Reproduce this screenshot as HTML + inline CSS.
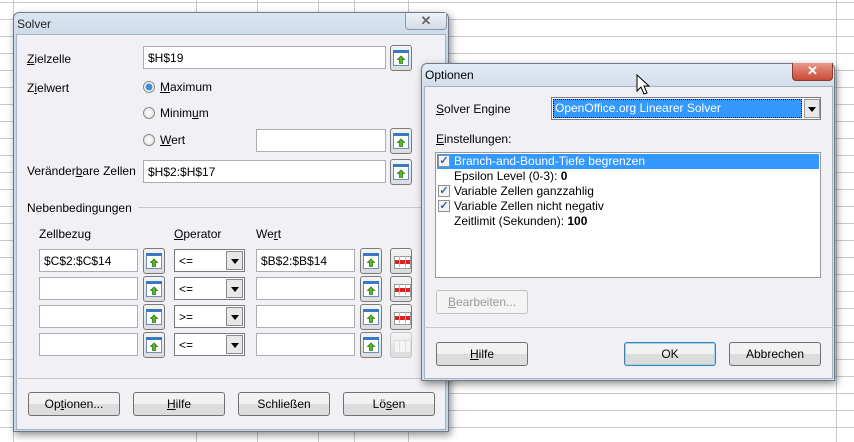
<!DOCTYPE html>
<html><head><meta charset="utf-8"><style>
*{box-sizing:border-box;margin:0;padding:0}
body{width:854px;height:442px;overflow:hidden;position:relative;font-family:"Liberation Sans",sans-serif;font-size:12px;color:#000;
background-color:#fff;
background-image:linear-gradient(#c8c8c8 1px,transparent 1px);
background-size:100% 17px;background-position:0 2px;}
.v{position:absolute;top:0;width:1px;height:442px;background:#c8c8c8}
.a{position:absolute;white-space:nowrap}
.win{position:absolute;border:1px solid #6f7a86;border-radius:6px 6px 0 0;background:linear-gradient(#dbe6f2,#c9d6e4 30px);box-shadow:2px 3px 8px rgba(0,0,0,.45)}
.client{position:absolute;background:#f1f0f4;border:1px solid #a6b2c0}
.inp{position:absolute;background:#fff;border:1px solid #abadb3;height:23px;padding:4px 0 0 4px}
.rb{position:absolute;width:22px;height:26px;border:1px solid #7a7a7a;border-radius:3px;background:linear-gradient(#f4f4f4,#dcdcdc)}
.rb svg{position:absolute;left:2px;top:4px}
.del{position:absolute;width:22px;height:26px;border:1px solid #7a7a7a;border-radius:3px;background:linear-gradient(#f4f4f4,#dcdcdc)}
.del:before{content:"";position:absolute;left:3px;top:7px;width:15px;height:11px;background:linear-gradient(#fff 0 3px,#d22 3px 7px,#fff 7px);border:1px solid #999}
.del:after{content:"";position:absolute;left:8px;top:7px;width:5px;height:11px;border-left:1px solid #bbb;border-right:1px solid #bbb}
.del.dis{border-color:#c8c8c8}.del.dis:before{background:#f4f4f4;border-color:#ddd}.del.dis:after{border-color:#ddd}
.sel{position:absolute;background:#fff;border:1px solid #7a7a7a;height:23px;padding:4px 0 0 4px;width:71px}
.sel i{position:absolute;right:1px;top:1px;width:17px;height:19px;border:1px solid #888;background:#e8e8e8}
.sel i:after{content:"";position:absolute;left:4px;top:7px;border:4px solid transparent;border-top:5px solid #000}
.btn{position:absolute;height:24px;border:1px solid #707070;border-radius:3px;background:linear-gradient(#f2f2f2 50%,#dcdcdc 50%);text-align:center;line-height:22px}
.radio{position:absolute;width:12px;height:12px;border-radius:50%;border:1px solid #8a8a8a;background:radial-gradient(#fff,#ddd)}
.chk{position:absolute;width:12px;height:12px;border:1px solid #8f8f8f;background:#f4f4f4;color:#3a5fa8;font-size:11px;line-height:10px;text-align:center;font-weight:bold}
u{text-decoration:underline}
</style></head><body>
<svg width="0" height="0" style="position:absolute"><defs><g id="ic"><rect x="0.5" y="0.5" width="15" height="15" fill="#fff" stroke="#6a8fbf"/><rect x="0" y="0" width="16" height="3" fill="#3b78c4"/><path d="M8 6 L4.5 9.5 H6.5 V13.5 H9.5 V9.5 H11.5 Z" fill="#5cb82a" stroke="#2e7a10" stroke-width="0.8"/></g></defs></svg>
<div class="v" style="left:196px"></div><div class="v" style="left:257px"></div><div class="v" style="left:318px"></div><div class="v" style="left:354px"></div><div class="v" style="left:408px"></div><div class="v" style="left:836px"></div><div class="v" style="left:13px"></div>

<!-- Solver -->
<div class="win" style="left:13px;top:12px;width:436px;height:420px"></div>
<div class="a" style="left:17px;top:17px;font-size:12px;color:#222">Solver</div>
<div class="a" style="left:405px;top:13px;width:42px;height:17px;border:1px solid #8c97a5;border-top:0;border-radius:0 0 4px 4px;background:linear-gradient(#eef2f7,#d4dce6);text-align:center;color:#666;font-weight:bold;font-size:13px;line-height:15px">✕</div>
<div class="client" style="left:16px;top:34px;width:430px;height:396px"></div>

<div class="a" style="left:27px;top:52px"><u>Z</u>ielzelle</div>
<div class="inp" style="left:143px;top:46px;width:243px">$H$19</div>
<div class="rb" style="left:390px;top:45px"><svg width="16" height="16"><use href="#ic"/></svg></div>
<div class="a" style="left:27px;top:81px">Z<u>i</u>elwert</div>
<div class="radio" style="left:143px;top:81px;background:radial-gradient(#3a8fd8 0 3px,#fff 4px,#ddd)"></div>
<div class="a" style="left:160px;top:80px"><u>M</u>aximum</div>
<div class="radio" style="left:143px;top:107px"></div>
<div class="a" style="left:160px;top:106px">Minim<u>u</u>m</div>
<div class="radio" style="left:143px;top:134px"></div>
<div class="a" style="left:160px;top:133px"><u>W</u>ert</div>
<div class="inp" style="left:256px;top:129px;width:130px"></div>
<div class="rb" style="left:390px;top:128px"><svg width="16" height="16"><use href="#ic"/></svg></div>
<div class="a" style="left:27px;top:164px">Veränder<u>b</u>are Zellen</div>
<div class="inp" style="left:143px;top:160px;width:243px">$H$2:$H$17</div>
<div class="rb" style="left:390px;top:159px"><svg width="16" height="16"><use href="#ic"/></svg></div>

<div class="a" style="left:27px;top:201px">Nebenbedingungen</div>
<div class="a" style="left:138px;top:207px;width:307px;height:1px;background:#c8c8cc"></div>
<div class="a" style="left:39px;top:227px">Zellbezu<u>g</u></div>
<div class="a" style="left:174px;top:227px"><u>O</u>perator</div>
<div class="a" style="left:256px;top:227px">We<u>r</u>t</div>

<div class="inp" style="left:39px;top:249px;width:99px">$C$2:$C$14</div><div class="rb" style="left:143px;top:248px"><svg width="16" height="16"><use href="#ic"/></svg></div><div class="sel" style="left:174px;top:249px">&lt;=<i></i></div><div class="inp" style="left:256px;top:249px;width:99px">$B$2:$B$14</div><div class="rb" style="left:360px;top:248px"><svg width="16" height="16"><use href="#ic"/></svg></div><div class="del" style="left:390px;top:248px"></div>
<div class="inp" style="left:39px;top:277px;width:99px"></div><div class="rb" style="left:143px;top:276px"><svg width="16" height="16"><use href="#ic"/></svg></div><div class="sel" style="left:174px;top:277px">&lt;=<i></i></div><div class="inp" style="left:256px;top:277px;width:99px"></div><div class="rb" style="left:360px;top:276px"><svg width="16" height="16"><use href="#ic"/></svg></div><div class="del" style="left:390px;top:276px"></div>
<div class="inp" style="left:39px;top:305px;width:99px"></div><div class="rb" style="left:143px;top:304px"><svg width="16" height="16"><use href="#ic"/></svg></div><div class="sel" style="left:174px;top:305px">&gt;=<i></i></div><div class="inp" style="left:256px;top:305px;width:99px"></div><div class="rb" style="left:360px;top:304px"><svg width="16" height="16"><use href="#ic"/></svg></div><div class="del" style="left:390px;top:304px"></div>
<div class="inp" style="left:39px;top:333px;width:99px"></div><div class="rb" style="left:143px;top:332px"><svg width="16" height="16"><use href="#ic"/></svg></div><div class="sel" style="left:174px;top:333px">&lt;=<i></i></div><div class="inp" style="left:256px;top:333px;width:99px"></div><div class="rb" style="left:360px;top:332px"><svg width="16" height="16"><use href="#ic"/></svg></div><div class="del dis" style="left:390px;top:332px"></div>

<div class="a" style="left:16px;top:378px;width:430px;height:1px;background:#c8c8cc"></div>
<div class="btn" style="left:28px;top:392px;width:92px">Op<u>t</u>ionen...</div>
<div class="btn" style="left:133px;top:392px;width:92px"><u>H</u>ilfe</div>
<div class="btn" style="left:238px;top:392px;width:92px">Schließen</div>
<div class="btn" style="left:343px;top:392px;width:92px">Lö<u>s</u>en</div>

<!-- Optionen -->
<div class="win" style="left:421px;top:63px;width:414px;height:318px;background:linear-gradient(#e3ecf6,#d2ddea 24px)"></div>
<div class="a" style="left:425px;top:68px;color:#000">Optionen</div>
<div class="a" style="left:792px;top:63px;width:41px;height:18px;border:1px solid #8a3a30;border-top:0;border-radius:0 0 4px 4px;background:linear-gradient(#e89a8a,#c84a36);text-align:center;color:#fff;font-weight:bold;font-size:13px;line-height:16px">✕</div>
<div class="client" style="left:424px;top:86px;width:409px;height:293px"></div>
<div class="a" style="left:436px;top:102px"><u>S</u>olver Engine</div>
<div class="a" style="left:551px;top:97px;width:270px;height:23px;border:1px solid #7a7a7a;background:#fff"></div>
<div class="a" style="left:553px;top:99px;width:249px;height:19px;background:#3399ff;outline:1px dotted #000;outline-offset:-1px;color:#fff;padding:2px 0 0 2px">OpenOffice.org Linearer Solver</div>
<div class="a" style="left:804px;top:99px;width:16px;height:19px;border:1px solid #999;background:#e8e8e8"><span style="position:absolute;left:3px;top:7px;border:4px solid transparent;border-top:5px solid #000"></span></div>
<div class="a" style="left:436px;top:132px"><u>E</u>instellungen:</div>
<div class="a" style="left:435px;top:152px;width:386px;height:126px;background:#fff;border:1px solid #999"></div>
<div class="a" style="left:437px;top:154px;width:382px;height:15px;background:#3399ff"></div>
<div class="chk" style="left:438px;top:155px">✓</div><div class="a" style="left:454px;top:154px;color:#fff">Branch-and-Bound-Tiefe begrenzen</div>
<div class="a" style="left:454px;top:169px">Epsilon Level (0-3): <b>0</b></div>
<div class="chk" style="left:438px;top:185px">✓</div><div class="a" style="left:454px;top:184px">Variable Zellen ganzzahlig</div>
<div class="chk" style="left:438px;top:200px">✓</div><div class="a" style="left:454px;top:199px">Variable Zellen nicht negativ</div>
<div class="a" style="left:454px;top:214px">Zeitlimit (Sekunden): <b>100</b></div>
<div class="btn" style="left:436px;top:290px;width:92px;border-color:#c0c0c0;background:#f4f4f4;color:#9a9a9a"><u>B</u>earbeiten...</div>
<div class="a" style="left:424px;top:327px;width:409px;height:1px;background:#c8c8cc"></div>
<div class="btn" style="left:436px;top:342px;width:92px"><u>H</u>ilfe</div>
<div class="btn" style="left:624px;top:342px;width:92px;border-color:#3c7fb1;box-shadow:inset 0 0 0 1px #9cd3f5">OK</div>
<div class="btn" style="left:729px;top:342px;width:92px">Abbrechen</div>

<svg class="a" style="left:636px;top:74px" width="16" height="24" viewBox="0 0 16 24"><path d="M1 1 L1 17 L5 13 L8 20 L11 19 L8 12 L13 12 Z" fill="#fff" stroke="#000" stroke-width="1"/></svg>
</body></html>
